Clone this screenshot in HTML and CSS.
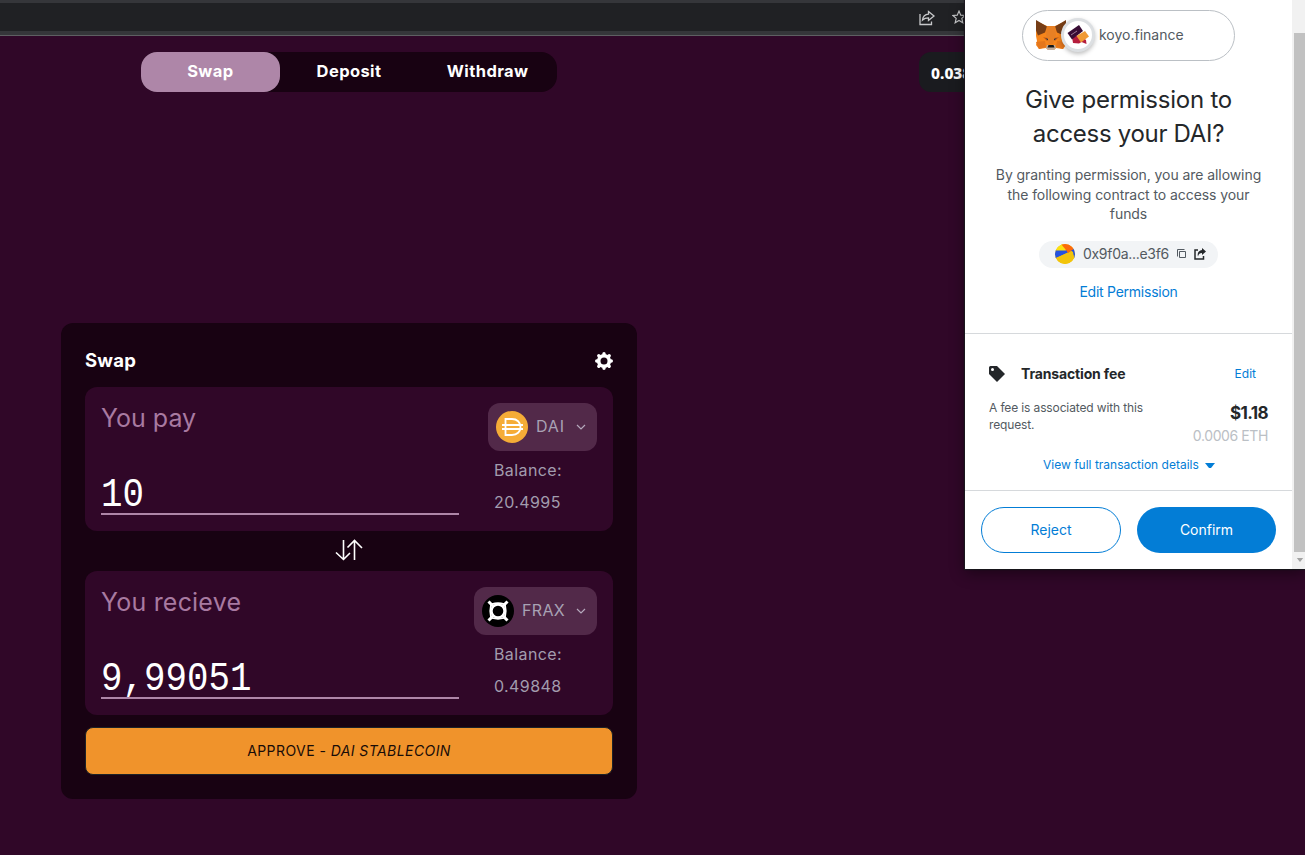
FILE: index.html
```html
<!DOCTYPE html>
<html lang="en">
<head>
<meta charset="utf-8">
<title>Swap</title>
<link rel="stylesheet" href="styles.css">
</head>
<body>
<div class="browser-bar">
  <svg class="share" viewBox="0 0 18 16" width="18" height="16"><path d="M1 4v10.500h11.500v-3M9.500 1.500l5.500 4.500-5.500 4.500v-2.700c-3 0-4.500.7-6 2.200.4-3 2.300-5.500 6-5.800z"/></svg>
  <svg class="star" viewBox="0 0 16 16" width="14" height="14"><path d="M8 1.200l2 4.700 5 .4-3.800 3.300 1.200 5L8 12l-4.400 2.600 1.200-5L1 6.300l5-.4z"/></svg>
</div>
<header class="topbar">
  <nav class="tabs">
    <a class="tab active">Swap</a><a class="tab">Deposit</a><a class="tab">Withdraw</a>
  </nav>
  <div class="wallet">0.038 ETH</div>
</header>
<main class="card">
  <div class="card-head">
    <h1>Swap</h1>
    <svg viewBox="0 0 20 20" width="20" height="20"><circle cx="10" cy="10" r="5.300" fill="none" stroke="#fff" stroke-width="3.600"/><path stroke="#fff" stroke-width="3.400" stroke-linecap="round" d="M10 2.700v1M10 16.300v1M2.700 10h1M16.300 10h1M4.800 4.800l.7.700M14.500 14.500l.7.700M15.200 4.800l-.7.700M4.800 15.200l.7-.7"/></svg>
  </div>
  <section class="panel">
    <div class="amount"><label>You pay</label><div class="value"><span>10</span></div></div>
    <div class="side">
      <button class="token">
        <svg viewBox="0 0 32 32" width="32" height="32"><circle cx="16" cy="16" r="16" fill="#f5ac37"/><g fill="none" stroke="#fff" stroke-width="1.800"><path d="M9.500 8h6.500c5 0 8.500 3.300 8.500 8s-3.500 8-8.500 8H9.500zM6 14h21M6 18h21"/></g></svg>
        <span class="t-dai">DAI</span>
        <svg class="chev" viewBox="0 0 10 6" width="10" height="6"><path d="M1 1l4 4 4-4"/></svg>
      </button>
      <div class="balance">Balance:<br>20.4995</div>
    </div>
  </section>
  <div class="switch">
    <svg viewBox="0 0 28 22" width="28" height="22"><path d="M8.500 1v19M1 13.500l7.500 7 6.500-6.500M19.500 21V2M12.500 8.500l7-7 7.500 7.500"/></svg>
  </div>
  <section class="panel">
    <div class="amount"><label class="lab-get">You recieve</label><div class="value"><span>9,99051</span></div></div>
    <div class="side">
      <button class="token">
        <svg viewBox="0 0 32 32" width="32" height="32"><circle cx="16" cy="16" r="16"/><g fill="none" stroke="#fff"><circle cx="16" cy="16" r="6.500" stroke-width="2.400"/><path stroke-width="3" d="M6.500 6.500l4.500 4.500M25.500 6.500L21 11M6.500 25.500L11 21M25.500 25.500L21 21"/><path stroke-width="1.800" d="M10 9q6-1.500 12 0M10 23q6 1.500 12 0M9 10q-1.500 6 0 12M23 10q1.500 6 0 12"/></g></svg>
        <span class="t-frax">FRAX</span>
        <svg class="chev" viewBox="0 0 10 6" width="10" height="6"><path d="M1 1l4 4 4-4"/></svg>
      </button>
      <div class="balance">Balance:<br>0.49848</div>
    </div>
  </section>
  <button class="approve">APPROVE - <i>DAI STABLECOIN</i></button>
</main>

<aside class="popup">
  <div class="content">
    <div class="ask">
      <div class="site">
        <svg class="fox" viewBox="0 0 32 30" width="32" height="30">
          <path fill="#f6851b" d="M1 1l11 5h8l11-5v15l-1 5 1 4-3 4-7-1-2 2h-6l-2-2-7 1-3-4 1-4-1-5z"/>
          <path fill="#763d16" d="M1 0l11 6.500-2 6-7 3-2-5zM31 0L20 6.500l2 6 7 3 2-5z"/>
          <path fill="#e88024" d="M12 6h8l1 9-3 9h-4l-3-9z"/>
          <path fill="#e4761b" d="M1 22l9-1 1 6-7 2zM31 22l-9-1-1 6 7 2z"/>
          <path fill="#cd6116" d="M8 17l5 1-1 3zM24 17l-5 1 1 3z"/>
          <path fill="#233447" d="M10 18l3 1v1.500zM22 18l-3 1v1.500z"/>
          <path fill="#c0ad9e" d="M12 25h8l1 3-2 2h-6l-2-2z"/><path fill="#161616" d="M13.500 25h5l1 2.500h-7z"/>
        </svg>
        <span class="badge"><svg viewBox="0 0 24 24" width="24" height="24"><path fill="#b51d3d" d="M6 14l8-2 6 5 .5 4-5-2-2.500 1.500L7 20z"/><path fill="#380c34" d="M1.500 10L13 2l4 6-11 8.500z"/><path fill="#f09a35" d="M10.500 13L19 8l4 5.500-8 6z"/><path stroke="#b795b0" stroke-width=".8" d="M5 12l6-4"/></svg></span>
        <span class="host">koyo.finance</span>
      </div>
      <h2><span class="h-a">Give permission to</span><br><span class="h-b">access your DAI?</span></h2>
      <p>By granting permission, you are allowing<br>the following contract to access your<br>funds</p>
      <div class="address">
        <svg viewBox="0 0 20 20" width="20" height="20"><defs><clipPath id="disc"><circle cx="10" cy="10" r="10"/></clipPath></defs><g clip-path="url(#disc)"><path fill="#f2c40a" d="M0 0h20v20H0z"/><path fill="#2452e0" d="M0 6h12l8-2v12L17 7 1 14H0z"/><path fill="#f2c40a" d="M1 14L16 7l2 1 1 6-3 6H4z"/><path fill="#fbe012" d="M0 0h8l3 6.500H0z"/><path fill="#fc6a0b" d="M6 0h14v4l-7 5-2-3z"/></g></svg>
        <span>0x9f0a...e3f6</span>
        <svg class="copy" viewBox="0 0 10 10" width="10" height="10"><path d="M2.500 2.500h6v6h-6zM.5 7.500v-7h7"/></svg>
        <svg class="open" viewBox="0 0 12 12" width="12" height="12"><path fill="none" stroke="#24272a" stroke-width="1.500" d="M4 2H1v9h8.500V8"/><path fill="#24272a" d="M8 0l4 3.500L8 7V5C5.500 5 4.500 6.500 4 8.500 2.800 5 5 2.200 8 2z"/></svg>
      </div>
      <a class="edit-perm">Edit Permission</a>
    </div>
    <div class="fee">
      <div class="fee-head">
        <svg viewBox="0 0 16 16" width="16" height="16"><path fill="#24272a" fill-rule="evenodd" d="M0 1.500Q0 0 1.500 0H8l8 8-8 8-8-8zM3.500 2a1.500 1.500 0 1 0 0 3a1.500 1.500 0 1 0 0-3z"/></svg>
        <strong>Transaction fee</strong><a>Edit</a>
      </div>
      <div class="fee-body">
        <div class="note">A fee is associated with this<br>request.</div>
        <div class="cost"><b>$1.18</b><span>0.0006 ETH</span></div>
      </div>
      <a class="details"><span>View full transaction details</span><svg viewBox="0 0 10 6" width="10" height="6"><path fill="#037dd6" d="M0 0h10L6 5H4z"/></svg></a>
    </div>
    <div class="actions"><button class="reject">Reject</button><button class="confirm">Confirm</button></div>
  </div>
  <div class="scrollbar"><div class="thumb"></div><svg viewBox="0 0 8 5" width="8" height="4"><path fill="#a3a3a3" d="M0 0h8L4 5z"/></svg></div>
</aside>
</body>
</html>
```
FILE: styles.css
```css
* { box-sizing: border-box; }
body { margin: 0; width: 1305px; height: 855px; overflow: hidden; position: relative; background: #300728; color: #fff; font-family: Inter, "Open Sans", sans-serif; }
button { margin: 0; padding: 0; font-family: inherit; border: 0; }
svg { display: block; flex: none; }
h1, h2, p { margin: 0; font-weight: 400; }

.browser-bar { height: 36px; background: #202124; border-top: 3px solid #35363a; border-bottom: 1px solid #5e5f62; box-shadow: inset 0 -4px #35363a; display: flex; padding: 7px 0 0 919px; gap: 15px; }
.browser-bar svg { fill: none; stroke: #c8c9cb; stroke-width: 1.300; }

.topbar { display: flex; justify-content: space-between; padding: 16px 286px 0 141px; }
.tabs { display: flex; width: 416px; height: 40px; border-radius: 16px; background: #180212; }
.tab { flex: 1; border-radius: 16px; text-align: center; font-size: 16.500px; line-height: 38px; font-weight: 700; letter-spacing: .4px; color: #fff; }
.active { background: #ae86a8; }
.wallet { width: 100px; height: 40px; border-radius: 12px; background: #1a1b1f; padding-left: 12px; font: 800 15.500px/42px "Noto Sans", sans-serif; white-space: nowrap; }

.card { width: 576px; height: 476px; margin: 231px 0 0 61px; padding: 24px; border-radius: 12px; background: #180212; }
.card-head { display: flex; justify-content: space-between; height: 40px; }
.card-head svg { margin: 4px -1px 0 0; }
h1 { font-size: 18.500px; line-height: 27px; font-weight: 700; letter-spacing: .25px; }
.panel { display: flex; justify-content: space-between; height: 144px; padding: 16px; border-radius: 12px; background: #300728; }
.amount { width: 358px; display: flex; flex-direction: column; justify-content: space-between; }
label { font-size: 25px; line-height: 31px; color: #a87aa1; }
.lab-get { letter-spacing: .2px; }
.value { height: 44px; border-bottom: 2px solid #ae86a8; font: 40px/50px "Liberation Mono", monospace; }
.value span { display: inline-block; transform: scaleX(.895); transform-origin: left; }
.side { display: flex; flex-direction: column; align-items: flex-end; }
.token { flex: none; height: 48px; display: flex; align-items: center; padding: 0 11px 0 8px; border-radius: 12px; background: #522949; color: #a8a2b4; font-size: 16px; }
.token span { margin: 0 11px 0 8px; line-height: 20px; position: relative; top: -1px; }
.t-dai { letter-spacing: .9px; }
.t-frax { letter-spacing: .3px; }
.chev { fill: none; stroke: #b5a9bc; stroke-width: 1.200; }
.balance { width: 68px; margin: 3px 35px 0 0; font-size: 16px; line-height: 32px; letter-spacing: .4px; color: #a29cae; white-space: nowrap; }
.switch { height: 40px; display: flex; align-items: center; justify-content: center; }
.switch svg { fill: none; stroke: #fff; stroke-width: 1.600; margin-top: -2px; }
.approve { display: block; width: 528px; height: 48px; margin-top: 12px; padding-bottom: 1px; border: 1px solid #1b2228; border-radius: 8px; background: #f0932b; color: #180c08; font-size: 14px; letter-spacing: .43px; }

.popup { position: absolute; top: 0; right: 0; width: 340px; height: 569px; display: flex; background: #fff; color: #24272a; box-shadow: 0 4px 14px rgba(0,0,0,.45), 0 0 1px 1px #211d25; }
.content { width: 327px; }
.ask { height: 334px; border-bottom: 1px solid #d6d9dc; display: flex; flex-direction: column; align-items: center; padding-top: 10px; }
.site { width: 213px; height: 51px; border: 1px solid #bbc0c5; border-radius: 26px; display: flex; align-items: center; padding-left: 12px; }
.fox { margin-top: -2px; }
.badge { width: 34px; height: 34px; margin: -1px 0 0 -6px; border: 3px solid #dcdfe2; border-radius: 50%; background: #fff; box-shadow: 0 2px 4px rgba(0,0,0,.25); display: flex; align-items: center; justify-content: center; }
.host { margin: -2px 0 0 4px; font-size: 14px; color: #535a61; }
h2 { margin-top: 22px; font-size: 24px; line-height: 34px; text-align: center; }
.h-a { letter-spacing: -.22px; }
.h-b { letter-spacing: -.3px; }
p { margin-top: 14px; font-size: 14px; line-height: 19.600px; letter-spacing: -.07px; color: #535a61; text-align: center; white-space: nowrap; }
.address { width: 179px; height: 27px; margin-top: 17px; padding-left: 16px; border-radius: 14px; background: #f2f4f6; display: flex; align-items: center; font-size: 14px; color: #535a61; }
.address span { margin: -2px 0 0 8px; width: 86px; letter-spacing: -.3px; white-space: nowrap; }
.copy { margin-left: 8px; fill: none; stroke: #535a61; }
.open { margin-left: 7px; }
a { color: #037dd6; }
.edit-perm { margin-top: 14px; font-size: 14px; line-height: 20px; letter-spacing: -.25px; }
.fee { height: 157px; border-bottom: 1px solid #d6d9dc; padding: 29px 24px 0 24px; }
.fee-head { display: flex; align-items: center; height: 21px; font-size: 14px; }
.fee-head strong { margin: -1px 0 0 16px; font-size: 14px; letter-spacing: -.15px; }
.fee-head a { margin: 0 12px 0 auto; font-size: 12px; }
.fee-body { display: flex; justify-content: space-between; margin-top: 16px; height: 47px; white-space: nowrap; }
.note { margin-top: -1px; font-size: 12px; line-height: 17px; letter-spacing: -.13px; color: #535a61; }
.cost { display: flex; flex-direction: column; align-items: flex-end; padding-top: 2px; }
.cost b { font-size: 17px; line-height: 23px; letter-spacing: -.6px; }
.cost span { font-size: 14px; line-height: 21px; letter-spacing: -.4px; color: #bbc0c5; }
.details { display: flex; align-items: center; margin: 9px 0 0 54px; font-size: 12px; line-height: 18px; white-space: nowrap; }
.details svg { margin: 2px 0 0 6px; }
.actions { display: flex; gap: 16px; padding: 16px; }
.actions button { height: 46px; padding-bottom: 2px; border-radius: 23px; font-size: 14px; }
.actions .reject { width: 140px; border: 1px solid #037dd6; background: #fff; color: #037dd6; }
.actions .confirm { width: 139px; background: #037dd6; color: #fff; }
.scrollbar { width: 13px; border-left: 2px solid #f1f1f1; background: #f1f1f1; display: flex; flex-direction: column; align-items: center; padding-top: 33px; }
.thumb { width: 11px; height: 519px; background: #c1c1c1; margin-bottom: 6px; }
```
